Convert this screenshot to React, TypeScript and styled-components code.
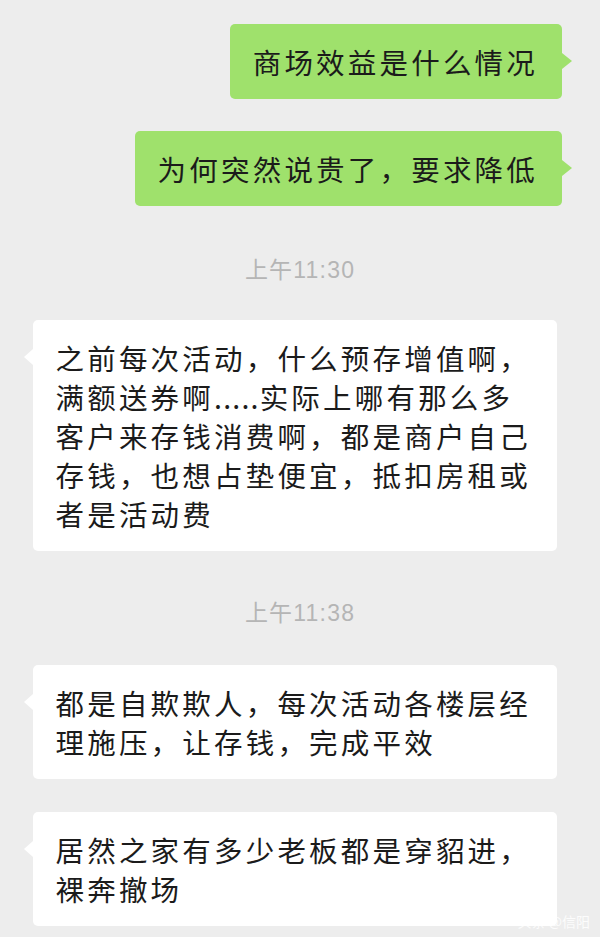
import React from "react";
import styled, { createGlobalStyle } from "styled-components";

const Global = createGlobalStyle`
  html, body { margin: 0; padding: 0; background: #ededed; }
  #root { min-height: 937px; }
`;

const Page = styled.div`
  position: relative;
  width: 600px;
  height: 937px;
  box-sizing: border-box;
  padding-top: 24px;
  background: #ededed;
  display: flex;
  flex-direction: column;
  overflow: hidden;
  font-family: "Noto Sans CJK SC", "Noto Sans", sans-serif;
`;

const Row = styled.div<{ $side: "left" | "right"; $top: number }>`
  display: flex;
  justify-content: ${(p) => (p.$side === "right" ? "flex-end" : "flex-start")};
  padding: ${(p) => (p.$side === "right" ? "0 38px 0 0" : "0 0 0 33px")};
  margin-top: ${(p) => p.$top}px;
`;

const Bubble = styled.div<{ $side: "left" | "right" }>`
  position: relative;
  box-sizing: border-box;
  max-width: 524px;
  padding: 18px 24px 18px 22.5px;
  border-radius: 5px;
  background: ${(p) => (p.$side === "right" ? "#9fe16c" : "#ffffff")};
  color: #1b1b1b;
  font-size: 28.5px;
  letter-spacing: 3.2px;
  line-height: 39px;
  word-break: break-all;
  &::after {
    content: "";
    position: absolute;
    top: 29px;
    width: 0;
    height: 0;
    border-top: 8px solid transparent;
    border-bottom: 8px solid transparent;
    ${(p) =>
      p.$side === "right"
        ? `right: -10px; border-left: 10px solid #9fe16c;`
        : `left: -9px; border-right: 9px solid #ffffff;`}
  }
`;

const Dots = styled.span`
  letter-spacing: 1.2px;
`;

const Timestamp = styled.div<{ $top: number; $bottom: number }>`
  margin: ${(p) => p.$top}px 0 ${(p) => p.$bottom}px;
  height: 30px;
  line-height: 30px;
  text-align: center;
  color: #b5b5b5;
  font-size: 23px;
  letter-spacing: 1.2px;
  font-family: "Liberation Sans", "Noto Sans CJK SC", sans-serif;
`;

const Watermark = styled.div`
  position: absolute;
  right: 10px;
  bottom: 6px;
  color: rgba(255, 255, 255, 0.85);
  font-size: 14px;
  font-family: "Noto Sans CJK SC", sans-serif;
`;

type Item =
  | { kind: "msg"; side: "left" | "right"; text: React.ReactNode; top: number }
  | { kind: "time"; text: string; top: number; bottom: number };

const items: Item[] = [
  { kind: "msg", side: "right", text: "商场效益是什么情况", top: 0 },
  { kind: "msg", side: "right", text: "为何突然说贵了，要求降低", top: 32 },
  { kind: "time", text: "上午11:30", top: 49, bottom: 0 },
  {
    kind: "msg",
    side: "left",
    text: (
      <>
        之前每次活动，什么预存增值啊，满额送券啊<Dots>.....</Dots>
        实际上哪有那么多客户来存钱消费啊，都是商户自己存钱，也想占垫便宜，抵扣房租或者是活动费
      </>
    ),
    top: 35,
  },
  { kind: "time", text: "上午11:38", top: 47, bottom: 0 },
  {
    kind: "msg",
    side: "left",
    text: "都是自欺欺人，每次活动各楼层经理施压，让存钱，完成平效",
    top: 37,
  },
  {
    kind: "msg",
    side: "left",
    text: "居然之家有多少老板都是穿貂进，裸奔撤场",
    top: 33,
  },
];

export default function App() {
  return (
    <>
      <Global />
      <Page>
        {items.map((it, i) =>
          it.kind === "time" ? (
            <Timestamp key={i} $top={it.top} $bottom={it.bottom}>
              {it.text}
            </Timestamp>
          ) : (
            <Row key={i} $side={it.side} $top={it.top}>
              <Bubble $side={it.side}>{it.text}</Bubble>
            </Row>
          )
        )}
        <Watermark>头条 @信阳</Watermark>
      </Page>
    </>
  );
}
